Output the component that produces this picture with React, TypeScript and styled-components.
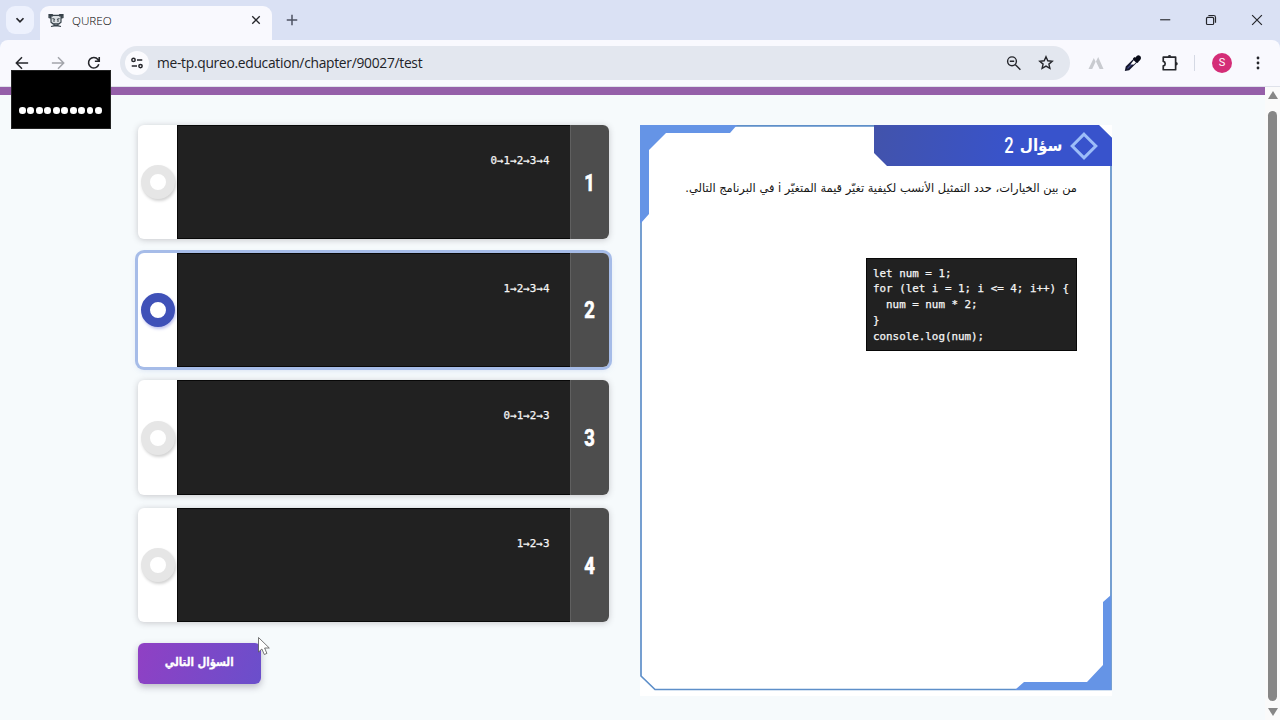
import React from "react";
import styled, { createGlobalStyle } from "styled-components";

const GlobalStyle = createGlobalStyle`
  * { box-sizing: border-box; }
  body { margin: 0; overflow: hidden; font-family: "Open Sans", "DejaVu Sans", sans-serif; }
`;

const Browser = styled.div`
  position: relative;
  width: 1280px;
  height: 720px;
  display: flex;
  flex-direction: column;
  overflow: hidden;
  background: #f6fafc;
`;

const TabStrip = styled.header`
  display: flex;
  align-items: flex-end;
  height: 40px;
  padding-left: 6px;
  background: #dae1f4;
`;

const TabSearch = styled.div`
  display: flex;
  align-items: center;
  justify-content: center;
  width: 28px;
  height: 28px;
  margin: 0 6px 6px 0;
  border-radius: 9px;
  background: #edf1fd;
`;

const Tab = styled.div`
  display: flex;
  align-items: center;
  width: 232px;
  height: 34px;
  padding: 0 11px 6px 8px;
  border-radius: 9px 9px 0 0;
  background: #f9f9fe;
`;

const TabTitle = styled.span`
  flex: 1;
  margin-left: 8px;
  font: 300 11.7px "Open Sans", sans-serif;
  color: #000;
`;

const NewTab = styled.div`
  display: flex;
  flex: 1;
  align-items: center;
  height: 40px;
  padding-left: 14px;
`;

const WindowControls = styled.div`
  display: flex;
  align-items: center;
  gap: 34px;
  height: 40px;
  padding-right: 17px;
`;

const Toolbar = styled.div`
  display: flex;
  align-items: center;
  height: 47px;
  padding: 0 15px;
  border-bottom: 1px solid #dfe2ea;
  border-radius: 8px 8px 0 0;
  background: #f9f9fe;
`;

const Strip = styled.div`
  background: #dae1f4;
`;

const NavButtons = styled.div`
  display: flex;
  gap: 22px;
  width: 105px;
`;

const AddressBar = styled.div`
  display: flex;
  align-items: center;
  width: 950px;
  height: 34px;
  padding: 0 16px 0 5px;
  border-radius: 17px;
  background: #e3e7ef;
`;

const SiteInfo = styled.div`
  display: flex;
  align-items: center;
  justify-content: center;
  width: 24px;
  height: 24px;
  border-radius: 50%;
  background: #fbfbfe;
`;

const Url = styled.span`
  flex: 1;
  margin-left: 8px;
  font: 13.8px/20px "Open Sans", sans-serif;
  letter-spacing: -0.28px;
  color: #222327;
`;

const AddressActions = styled.div`
  display: flex;
  gap: 16px;
`;

const Extensions = styled.div`
  display: flex;
  align-items: center;
  flex: 1;
  padding-left: 18px;
`;

const Divider = styled.i`
  width: 1px;
  height: 16px;
  margin: 0 17px 0 15px;
  background: #d5d9e4;
`;

const Avatar = styled.div`
  width: 20px;
  height: 20px;
  margin-right: 19px;
  border-radius: 50%;
  background: #d42d77;
  color: #fff;
  font: 11px/20px Roboto, sans-serif;
  text-align: center;
`;

const ExtensionButton = styled.span`
  display: flex;
  width: 18px;
  margin-left: 19.5px;
`;

const Viewport = styled.div`
  display: flex;
  flex: 1;
  min-height: 0;
`;

const Page = styled.main`
  flex: 1;
  border-top: 8px solid #955fa9;
`;

const Columns = styled.div`
  display: flex;
  gap: 31px;
  padding: 30px 0 0 138px;
`;

const Answers = styled.section`
  display: flex;
  flex-direction: column;
  align-items: flex-start;
  width: 471px;
`;

const AnswerCard = styled.div<{ $selected?: boolean }>`
  display: flex;
  width: 471px;
  height: 114.4px;
  margin-bottom: 13.3px;
  overflow: hidden;
  border-radius: 6px;
  background: #fff;
  box-shadow: ${(p) =>
    p.$selected ? "0 0 0 3px #a6bce8, 0 2px 7px #8aa5dd66" : "0 1px 6px rgba(60, 50, 60, 0.25)"};
`;

const RadioCell = styled.div`
  display: flex;
  align-items: center;
  justify-content: center;
  width: 39.4px;
`;

const Ring = styled.div<{ $selected?: boolean }>`
  width: 34px;
  height: 34px;
  border: 9.5px solid ${(p) => (p.$selected ? "#3f51b8" : "#e6e6e6")};
  border-radius: 50%;
  background: #fff;
  box-shadow: 1px 2px 3px ${(p) => (p.$selected ? "#7a80dd77" : "#0000002e")};
`;

const AnswerBody = styled.div`
  flex: 1;
  padding: 27px 20px 0 0;
  border: 1px solid #080808;
  border-width: 1px 0 1px 1px;
  background: #212121;
  color: #f5f5f5;
  font: 10.9px/16px "DejaVu Sans Mono", monospace;
  -webkit-text-stroke: 0.25px #f5f5f5;
  text-align: right;
`;

const AnswerNumber = styled.div`
  display: flex;
  align-items: center;
  justify-content: center;
  width: 39.5px;
  border-left: 1px solid #606060;
  background: #4d4d4d;
  color: #fff;
  padding-top: 2px;
  font: bold 23px Roboto, sans-serif;
`;

const Digit = styled.span`
  transform: scaleX(0.8);
  -webkit-text-stroke: 0.7px #fff;
`;

const NextButton = styled.button`
  width: 123px;
  height: 41px;
  margin-top: 7px;
  padding: 0 0 3px;
  border: 0;
  border-radius: 6px;
  background: linear-gradient(110deg, #9040c4, #6a4fcb);
  box-shadow: 0 3px 7px rgba(50, 40, 70, 0.3);
  color: #fff;
  font: bold 11.5px "DejaVu Sans", sans-serif;
  direction: rtl;
`;

const NextLabel = styled.span`
  display: inline-block;
  transform: scale(0.88, 1.05);
  -webkit-text-stroke: 0.3px #fff;
`;

const Question = styled.section`
  position: relative;
  width: 472px;
  height: 571px;
  background: #fff;
`;

const Frame = styled.svg`
  position: absolute;
  inset: 0;
`;

const QuestionContent = styled.div`
  position: relative;
  direction: rtl;
`;

const QuestionHeader = styled.h2`
  display: flex;
  align-items: center;
  gap: 7px;
  width: 238px;
  height: 41px;
  margin: 0;
  padding-right: 14px;
  color: #fff;
  font: bold 16.5px "DejaVu Sans", sans-serif;
  background: linear-gradient(100deg, #4253ab, #3853cc 60%);
  clip-path: polygon(0 0, 225px 0, 238px 13px, 238px 41px, 13px 41px, 0 28px);
`;

const HeaderWord = styled.span`
  transform: scaleX(0.92);
  transform-origin: right;
`;

const HeaderNumber = styled.span`
  margin-right: -4px;
  font: 500 22px Roboto, sans-serif;
  transform: scaleX(0.75);
  transform-origin: right;
`;

const Prompt = styled.p`
  height: 20px;
  margin: 12px 35px 0 0;
  color: #161616;
  font: 11.43px/20px "DejaVu Sans", sans-serif;
  white-space: nowrap;
`;

const Code = styled.pre`
  width: 211px;
  height: 93px;
  margin: 60px 35px 0 0;
  padding: 6.6px 0 0 6px;
  border: 1px solid #080808;
  background: #212121;
  color: #f5f5f5;
  direction: ltr;
  text-align: left;
  font: 10.87px/15.8px "DejaVu Sans Mono", monospace;
  -webkit-text-stroke: 0.25px #f5f5f5;
`;

const ScrollBar = styled.aside`
  display: flex;
  flex-direction: column;
  align-items: center;
  justify-content: space-between;
  width: 15px;
  padding: 4px 0 4px;
  background: #fafafa;
`;

const Thumb = styled.div`
  width: 9px;
  height: 590px;
  margin: 6px 0 2px;
  border-radius: 5px;
  background: #868686;
`;

const Mask = styled.div`
  position: absolute;
  left: 11px;
  top: 70px;
  display: flex;
  justify-content: space-between;
  width: 100px;
  height: 59px;
  padding: 36px 8px 0 7px;
  border: 1px solid #222;
  background: #000;
`;

const Dot = styled.i`
  width: 6.6px;
  height: 6.6px;
  border-radius: 50%;
  background: #fff;
`;

const Pointer = styled.svg`
  position: absolute;
  left: 257px;
  top: 636px;
`;

const Icon = ({ size = 16, color = "#25262b", width = 1.5, children }: {
  size?: number; color?: string; width?: number; children: React.ReactNode;
}) => (
  <svg width={size} height={size} viewBox="0 0 16 16" fill="none" stroke={color} strokeWidth={width}>
    {children}
  </svg>
);

const answers = ["0→1→2→3→4", "1→2→3→4", "0→1→2→3", "1→2→3"];
const selected = 1;

const code = `let num = 1;
for (let i = 1; i <= 4; i++) {
  num = num * 2;
}
console.log(num);`;

export default function App() {
  return (
    <Browser>
      <GlobalStyle />
      <TabStrip>
        <TabSearch>
          <Icon size={14} width={2}><path d="m4 6 4 4 4-4" /></Icon>
        </TabSearch>
        <Tab>
          <svg width="16" height="15" viewBox="0 0 16 15" fill="none" stroke="#38434b" strokeWidth="1.2">
            <path d="M1 4.5V1.5h3l1 .8h6l1-.8h3v3l-2 .8v4l-2 1.5H5L3 9.3V5.3z" fill="#dce0e4" />
            <path d="M1 2.5h4M11 2.5h4M1.5 4h2M12.5 4h2" strokeWidth="1.8" />
            <path d="m4.5 5.5 2.5 1M11.5 5.5 9 6.5M5 8h2M9 8h2M6 10.8v1.4h4v-1.4M3 13.5l3-.6h4l3 .6" />
          </svg>
          <TabTitle>QUREO</TabTitle>
          <Icon size={10} width={2.1}><path d="m2 2 12 12M14 2 2 14" /></Icon>
        </Tab>
        <NewTab>
          <Icon size={12} width={2} color="#4d5262"><path d="M8 1v14M1 8h14" /></Icon>
        </NewTab>
        <WindowControls>
          <Icon size={12} width={1.5}><path d="M1.5 7.7H15" /></Icon>
          <Icon size={12} width={1.6}>
            <rect x="2" y="4.5" width="9.5" height="9.5" rx="1.5" />
            <path d="M4.5 2h7a2.5 2.5 0 0 1 2.5 2.5v7" />
          </Icon>
          <Icon size={12} width={1.6}><path d="m1.5 1.5 13 13M14.5 1.5l-13 13" /></Icon>
        </WindowControls>
      </TabStrip>
      <Strip>
        <Toolbar>
          <NavButtons>
            <Icon size={14} width={1.7}><path d="M15 8H2M8 1.5 1.5 8 8 14.5" /></Icon>
            <Icon size={14} width={1.7} color="#a2a4aa"><path d="M1 8h13M8 1.5 14.5 8 8 14.5" /></Icon>
            <Icon size={14} width={1.8}><path d="M13.5 9.5A6 6 0 1 1 12.5 4L14 6M14 1v5H9" /></Icon>
          </NavButtons>
          <AddressBar>
            <SiteInfo>
              <Icon size={14} width={1.7}>
                <circle cx="4" cy="4.5" r="1.9" /><path d="M8 4.5h6M2 11.5h6" /><circle cx="12" cy="11.5" r="1.9" />
              </Icon>
            </SiteInfo>
            <Url>me-tp.qureo.education/chapter/90027/test</Url>
            <AddressActions>
              <Icon width={1.4}><circle cx="6" cy="6.3" r="4.4" /><path d="m9.4 9.7 5 5M3.8 6.3h4.4" /></Icon>
              <Icon width={1.4}><path d="m8 1.8 1.8 4 4.4.4-3.3 2.9 1 4.3L8 11.1l-3.9 2.3 1-4.3-3.3-2.9 4.4-.4z" /></Icon>
            </AddressActions>
          </AddressBar>
          <Extensions>
            <Icon color="none"><path fill="#c9cbd0" d="M.5 14 5.8 3l1.8 3.8L4.2 14zM15.5 14 10.2 2 8 6.5 11.6 14z" /></Icon>
            <ExtensionButton>
              <Icon size={18}>
                <path d="m8.8 5.2 2 2-6.6 6.5-2.4.4.5-2.5z" fill="#424785" stroke="#15172d" strokeWidth="1.7" />
                <path d="m8.6 5.6 2 2-1.8 1.8h-3z" fill="#fff" stroke="none" />
                <path d="m8.6 3.3 4 4M10 4.7 12 2.5q1.5-.8 2 .6t-1.7 2.7z" fill="#090b18" stroke="#090b18" strokeWidth="2" />
              </Icon>
            </ExtensionButton>
            <ExtensionButton>
              <Icon size={18} width={1.5}>
                <path d="M2 2.8h11v11.2H2v-3.4c2.300-.4 2.300-3.600 0-4z" strokeLinejoin="round" />
                <path d="M6 2.500a1.600 1.600 0 0 1 3.200 0zM13.300 7a1.600 1.600 0 0 1 0 3.200z" fill="#25262b" stroke="none" />
              </Icon>
            </ExtensionButton>
            <Divider />
            <Avatar>S</Avatar>
            <svg width="14" height="16" viewBox="0 0 14 16" fill="#25262b">
              <circle cx="7" cy="3" r="1.4" /><circle cx="7" cy="8" r="1.4" /><circle cx="7" cy="13" r="1.4" />
            </svg>
          </Extensions>
        </Toolbar>
      </Strip>
      <Viewport>
        <Page>
          <Columns>
            <Answers>
              {answers.map((text, i) => (
                <AnswerCard key={text} $selected={i === selected}>
                  <RadioCell><Ring $selected={i === selected} /></RadioCell>
                  <AnswerBody>{text}</AnswerBody>
                  <AnswerNumber><Digit>{i + 1}</Digit></AnswerNumber>
                </AnswerCard>
              ))}
              <NextButton><NextLabel>السؤال التالي</NextLabel></NextButton>
            </Answers>
            <Question>
              <Frame width="472" height="571">
                <path d="M1 .8H458L471 13V564.5H15L1 551Z" fill="none" stroke="#5e8fc9" strokeWidth="1.7" />
                <path d="M0 0H97L90 8H26L9 25V89L1 98H0ZM471 470V565H375L384 557H447L463 540V477Z" fill="#6594e6" />
              </Frame>
              <QuestionContent>
                <QuestionHeader>
                  <svg width="28" height="28" viewBox="0 0 28 28" fill="none" stroke="#9dbdf8" strokeWidth="3">
                    <path d="M14 2.2 25.8 14 14 25.8 2.2 14z" />
                  </svg>
                  <HeaderWord>سؤال</HeaderWord>
                  <HeaderNumber>2</HeaderNumber>
                </QuestionHeader>
                <Prompt>من بين الخيارات، حدد التمثيل الأنسب لكيفية تغيّر قيمة المتغيّر i في البرنامج التالي.</Prompt>
                <Code>{code}</Code>
              </QuestionContent>
            </Question>
          </Columns>
        </Page>
        <ScrollBar>
          <svg width="10" height="8"><path d="M5 0 10 8H0Z" fill="#868686" /></svg>
          <Thumb />
          <svg width="10" height="8"><path d="M0 0H10L5 8Z" fill="#868686" /></svg>
        </ScrollBar>
      </Viewport>
      <Mask>{Array.from({ length: 10 }, (_, i) => <Dot key={i} />)}</Mask>
      <Pointer width="14" height="20" viewBox="0 0 14 20">
        <path d="M1.5 1.5V16l3.4-3 2.4 5.5 2.6-1.1L7.6 12h4.7z" fill="#fff" stroke="#555" strokeWidth=".8" />
      </Pointer>
    </Browser>
  );
}
